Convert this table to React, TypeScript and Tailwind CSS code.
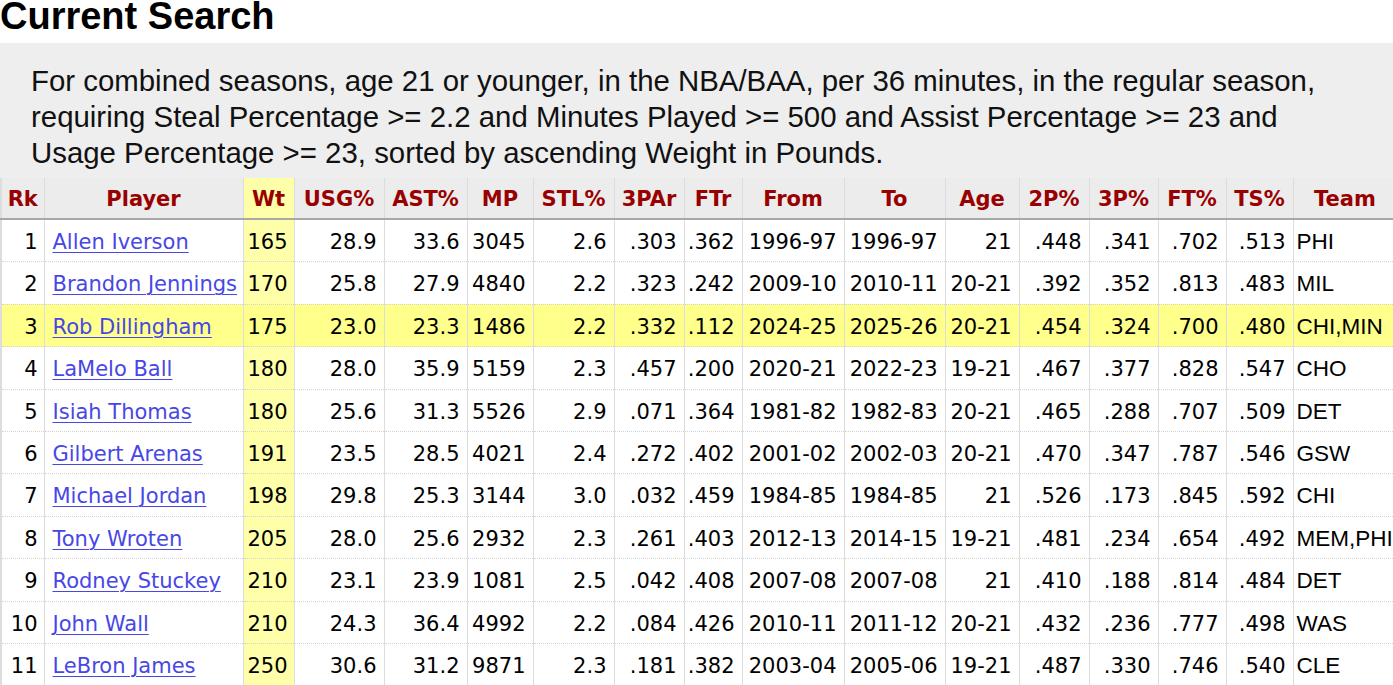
import React from "react";

type Row = {
  rk: number;
  player: string;
  wt: string;
  usg: string;
  ast: string;
  mp: string;
  stl: string;
  tpar: string;
  ftr: string;
  from: string;
  to: string;
  age: string;
  p2: string;
  p3: string;
  ft: string;
  ts: string;
  team: string;
  hl?: boolean;
};

const raw = [
  "1|Allen Iverson|165|28.9|33.6|3045|2.6|.303|.362|1996-97|1996-97|21|.448|.341|.702|.513|PHI",
  "2|Brandon Jennings|170|25.8|27.9|4840|2.2|.323|.242|2009-10|2010-11|20-21|.392|.352|.813|.483|MIL",
  "3|Rob Dillingham|175|23.0|23.3|1486|2.2|.332|.112|2024-25|2025-26|20-21|.454|.324|.700|.480|CHI,MIN",
  "4|LaMelo Ball|180|28.0|35.9|5159|2.3|.457|.200|2020-21|2022-23|19-21|.467|.377|.828|.547|CHO",
  "5|Isiah Thomas|180|25.6|31.3|5526|2.9|.071|.364|1981-82|1982-83|20-21|.465|.288|.707|.509|DET",
  "6|Gilbert Arenas|191|23.5|28.5|4021|2.4|.272|.402|2001-02|2002-03|20-21|.470|.347|.787|.546|GSW",
  "7|Michael Jordan|198|29.8|25.3|3144|3.0|.032|.459|1984-85|1984-85|21|.526|.173|.845|.592|CHI",
  "8|Tony Wroten|205|28.0|25.6|2932|2.3|.261|.403|2012-13|2014-15|19-21|.481|.234|.654|.492|MEM,PHI",
  "9|Rodney Stuckey|210|23.1|23.9|1081|2.5|.042|.408|2007-08|2007-08|21|.410|.188|.814|.484|DET",
  "10|John Wall|210|24.3|36.4|4992|2.2|.084|.426|2010-11|2011-12|20-21|.432|.236|.777|.498|WAS",
  "11|LeBron James|250|30.6|31.2|9871|2.3|.181|.382|2003-04|2005-06|19-21|.487|.330|.746|.540|CLE",
];

const rows: Row[] = raw.map((line) => {
  const f = line.split("|");
  return {
    rk: Number(f[0]),
    player: f[1],
    wt: f[2],
    usg: f[3],
    ast: f[4],
    mp: f[5],
    stl: f[6],
    tpar: f[7],
    ftr: f[8],
    from: f[9],
    to: f[10],
    age: f[11],
    p2: f[12],
    p3: f[13],
    ft: f[14],
    ts: f[15],
    team: f[16],
    hl: f[0] === "3",
  };
});

const widths = [43, 199, 51, 90, 83, 66, 81, 70, 58, 102, 101, 74, 70, 69, 68, 67, 104];
const headers = ["Rk", "Player", "Wt", "USG%", "AST%", "MP", "STL%", "3PAr", "FTr", "From", "To", "Age", "2P%", "3P%", "FT%", "TS%", "Team"];

const thBase =
  "bg-[#ececec] border-x border-x-[#dcdcdc] border-b-2 border-b-[#a8a8a8] text-[#990000] font-bold text-center px-[3px] pt-[6px] pb-[4px] leading-[30px] whitespace-nowrap";
const tdCore =
  "border-x border-x-[#dddddd] border-b border-b-[#d4d4d4] border-dotted [border-left-style:solid] [border-right-style:solid] leading-[29.4px] whitespace-nowrap align-middle";
const tdBase = `${tdCore} pt-[8px] pb-[4px]`;

function Num({ v, hl, className = "" }: { v: string; hl?: boolean; className?: string }) {
  return <td className={`${tdBase} text-right pr-[7px] pl-[2px] ${hl ? "bg-[#ffff8c]" : ""} ${className}`}>{v}</td>;
}

export default function App() {
  return (
    <div className="w-[1393px] h-[685px] overflow-hidden bg-white text-black">
      <h1 className="text-[38px] leading-[32px] font-bold m-0 pl-0 [font-family:'Liberation_Sans',Arial,sans-serif]">
        Current Search
      </h1>
      <div className="mt-[11px] bg-[#eeeeee] pl-[31px] pr-[50px] pt-[20px] pb-[7px] text-[29.4px] leading-[36px] [font-family:'Liberation_Sans',Arial,sans-serif] text-[#111]">
        For combined seasons, age 21 or younger, in the NBA/BAA, per 36 minutes, in the regular season, requiring Steal
        Percentage &gt;= 2.2 and Minutes Played &gt;= 500 and Assist Percentage &gt;= 23 and Usage Percentage &gt;= 23,
        sorted by ascending Weight in Pounds.
      </div>
      <table className="table-fixed border-collapse w-[1396px] text-[21px] [font-family:'DejaVu_Sans',Verdana,sans-serif] border-l-2 border-l-[#dddddd]">
        <colgroup>
          {widths.map((w, i) => (
            <col key={i} style={{ width: `${w}px` }} />
          ))}
        </colgroup>
        <thead>
          <tr>
            {headers.map((h) => (
              <th key={h} className={`${thBase} ${h === "Wt" ? "!bg-[#ffffaa] !border-l-[#6e6e6e]" : ""}`}>
                {h}
              </th>
            ))}
          </tr>
        </thead>
        <tbody>
          {rows.map((r) => (
            <tr key={r.rk} className={r.hl ? "bg-[#ffff8c]" : ""}>
              <Num v={String(r.rk)} hl={r.hl} className="!pr-[6px]" />
              <td className={`${tdBase} text-left pl-[8px] pr-[2px] ${r.hl ? "bg-[#ffff8c]" : ""}`}>
                <a href="#" className="text-[#4747e6] underline underline-offset-[3px] decoration-1">
                  {r.player}
                </a>
              </td>
              <td
                className={`${tdBase} !border-l-[#6e6e6e] text-right pr-[6px] ${r.hl ? "bg-[#ffff8c]" : "bg-[#ffffaa]"}`}
              >
                {r.wt}
              </td>
              <Num v={r.usg} hl={r.hl} />
              <Num v={r.ast} hl={r.hl} />
              <Num v={r.mp} hl={r.hl} />
              <Num v={r.stl} hl={r.hl} />
              <Num v={r.tpar} hl={r.hl} />
              <Num v={r.ftr} hl={r.hl} />
              <Num v={r.from} hl={r.hl} />
              <Num v={r.to} hl={r.hl} />
              <Num v={r.age} hl={r.hl} />
              <Num v={r.p2} hl={r.hl} />
              <Num v={r.p3} hl={r.hl} />
              <Num v={r.ft} hl={r.hl} />
              <Num v={r.ts} hl={r.hl} />
              <td
                className={`${tdCore} pt-[7px] pb-[5px] text-left pl-[3px] text-[22.5px] [font-family:'Liberation_Sans',Arial,sans-serif] ${
                  r.hl ? "bg-[#ffff8c]" : ""
                }`}
              >
                {r.team}
              </td>
            </tr>
          ))}
        </tbody>
      </table>
    </div>
  );
}
